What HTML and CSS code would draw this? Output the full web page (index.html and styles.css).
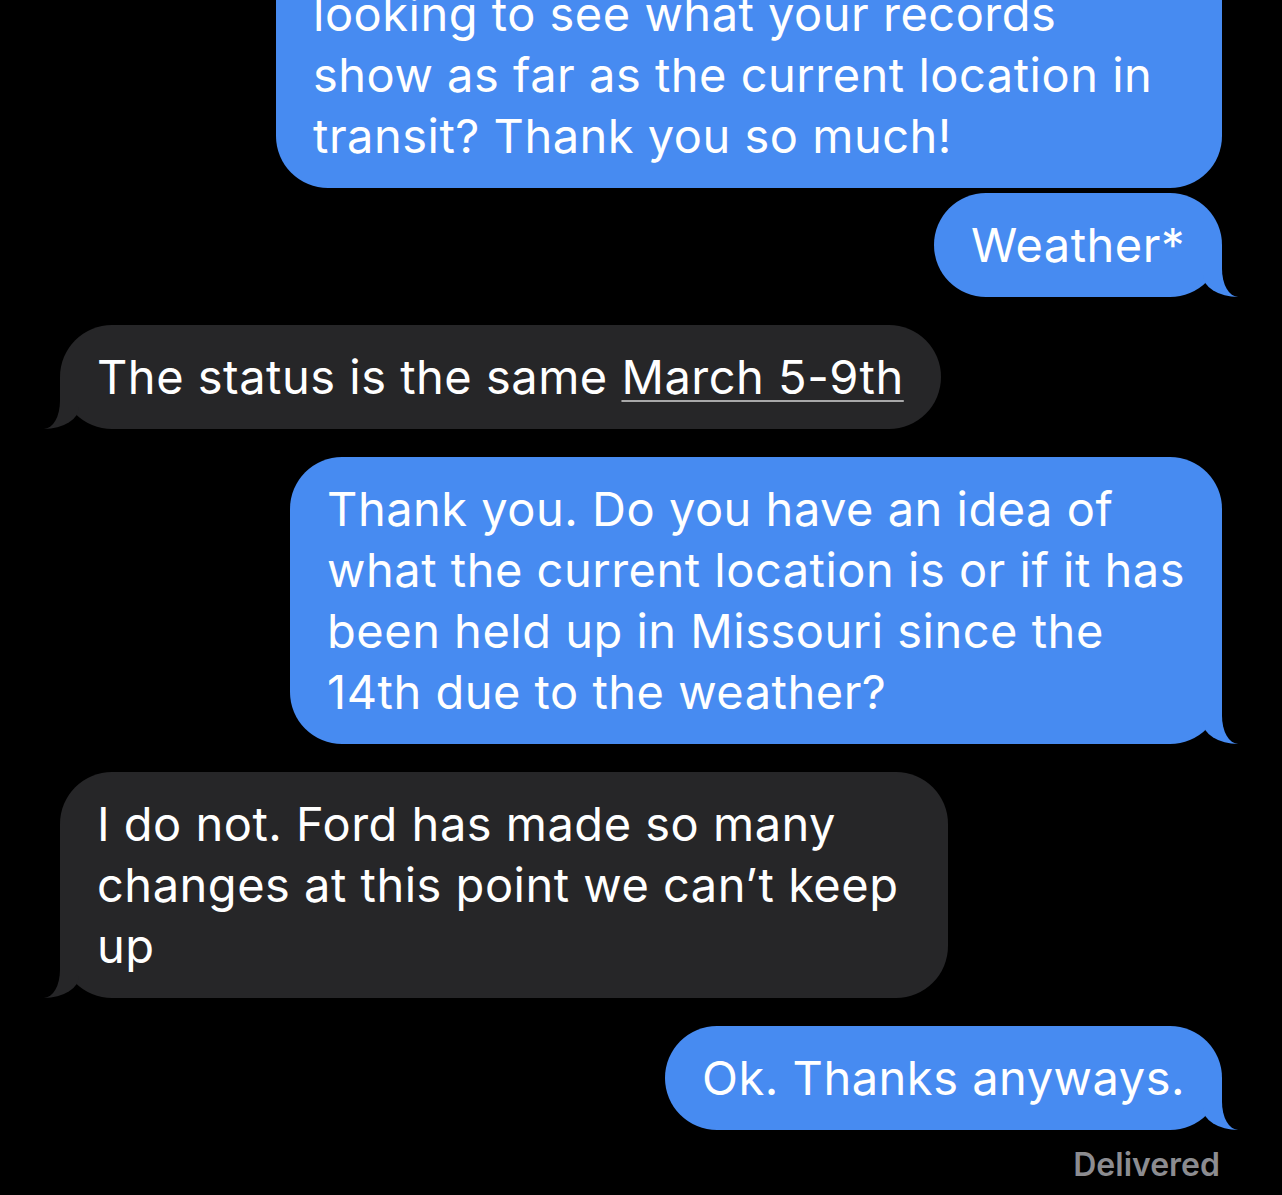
FILE: index.html
```html
<!DOCTYPE html>
<html lang="en">
<head>
    <meta charset="UTF-8">
    <meta name="viewport" content="width=device-width, initial-scale=1.0">
    <title>Messages</title>
    <link rel="stylesheet" href="styles.css">
</head>
<body>
    <div class="thread">
        <div class="bubble sent cut">looking to see what your records<br>show as far as the current location in<br>transit? Thank you so much!</div>
        <div class="bubble sent tail grouped">Weather*</div>

        <div class="bubble received tail">The status is the same <span class="link">March 5-9th</span></div>

        <div class="bubble sent tail">Thank you. Do you have an idea of<br>what the current location is or if it has<br>been held up in Missouri since the<br>14th due to the weather?</div>

        <div class="bubble received tail wide">I do not. Ford has made so many<br>changes at this point we can’t keep<br>up</div>

        <div class="bubble sent tail">Ok. Thanks anyways.</div>
        <div class="status">Delivered</div>
    </div>
</body>
</html>
```

FILE: styles.css
```css
body {
    margin: 0;
    background-color: #000;
    font-family: Inter, "Noto Sans", sans-serif;
    color: #fff;
    overflow: hidden;
}
.thread {
    display: flex;
    flex-direction: column;
    padding: 0 60px;
    margin-top: -126px;
}
.bubble {
    position: relative;
    max-width: 960px;
    padding: 21px 37px 22px;
    border-radius: 52px;
    font-size: 47px;
    letter-spacing: 0.5px;
    line-height: 61px;
    white-space: nowrap;
    margin-top: 28px;
}
.bubble.grouped {
    margin-top: 5px;
}
/* earlier lines of this message are scrolled off the top */
.bubble.cut {
    padding-top: 81px;
    min-width: 872px;
}
.bubble.wide {
    padding-right: 50px;
}
.sent {
    align-self: flex-end;
    background-color: #478bf1;
}
.received {
    align-self: flex-start;
    background-color: #262628;
}
.link {
    text-decoration: underline;
    text-decoration-color: rgba(255, 255, 255, 0.6);
    text-decoration-thickness: 2px;
    text-underline-offset: 6px;
}

/* tails */
.tail::before,
.tail::after {
    content: "";
    position: absolute;
    bottom: 0;
    height: 52px;
}
.sent.tail::before {
    right: -16px;
    width: 35px;
    background-color: #478bf1;
    border-bottom-left-radius: 35px 22px;
}
.sent.tail::after {
    right: -30px;
    width: 30px;
    background-color: #000;
    border-bottom-left-radius: 16px 28px;
}
.received.tail::before {
    left: -16px;
    width: 35px;
    background-color: #262628;
    border-bottom-right-radius: 35px 22px;
}
.received.tail::after {
    left: -30px;
    width: 30px;
    background-color: #000;
    border-bottom-right-radius: 16px 28px;
}

.status {
    align-self: flex-end;
    margin: 15px 2px 0 0;
    font-size: 32px;
    font-weight: 600;
    color: #8c8c90;
}
```
